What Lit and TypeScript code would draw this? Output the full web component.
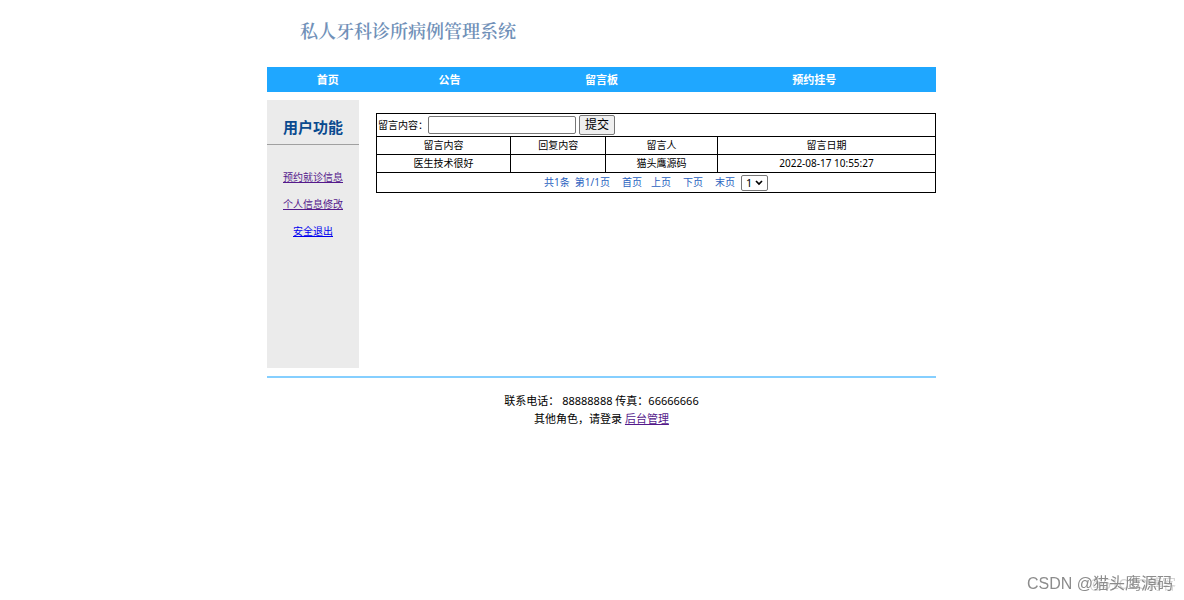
import { LitElement, html, css } from "lit";
import { customElement, property, state } from "lit/decorators.js";

interface Message {
  content: string;
  reply: string;
  author: string;
  date: string;
}

@customElement("side-menu")
class SideMenu extends LitElement {
  static styles = css`
    :host {
      display: block;
      background: #ebebeb;
      text-align: center;
    }
    .heading {
      margin: 0;
      padding: 15px 0 5px;
      border-bottom: 1px solid #a0a0a0;
      color: #0a4a8f;
      font-size: 15px;
      line-height: 24px;
      font-weight: bold;
    }
    .links {
      display: flex;
      flex-direction: column;
      gap: 11px;
      margin: 0;
      padding: 24px 0 0;
      list-style: none;
      line-height: 16px;
    }
    .link {
      color: #0000ee;
    }
    .visited {
      color: #551a8b;
    }
  `;

  render() {
    return html`
      <h2 class="heading">用户功能</h2>
      <ul class="links">
        <li><a class="link visited" href="#appointments">预约就诊信息</a></li>
        <li><a class="link visited" href="#profile">个人信息修改</a></li>
        <li><a class="link" href="#logout">安全退出</a></li>
      </ul>
    `;
  }
}

@customElement("message-board")
class MessageBoard extends LitElement {
  static styles = css`
    :host {
      display: block;
    }
    .board {
      width: 100%;
      border-collapse: collapse;
      table-layout: fixed;
      text-align: center;
      line-height: 15px;
    }
    .cell {
      border: 1px solid #000;
      padding: 1px;
      height: 15px;
      font-weight: normal;
    }
    .col-content {
      width: 24%;
    }
    .col-reply {
      width: 17%;
    }
    .col-author {
      width: 20%;
    }
    .form {
      display: flex;
      align-items: center;
      height: 20px;
    }
    .text {
      box-sizing: border-box;
      width: 148px;
      height: 18px;
      margin-right: 3px;
      border: 1px solid #767676;
      border-radius: 2px;
      padding: 0 2px;
      font: inherit;
    }
    .submit {
      box-sizing: border-box;
      height: 20px;
      border: 1px solid #767676;
      border-radius: 2px;
      padding: 0 5px;
      background: #efefef;
      color: #000;
      font-family: inherit;
      font-size: 12px;
      line-height: 18px;
    }
    .pager {
      display: flex;
      align-items: center;
      justify-content: center;
      height: 17px;
      color: #2a62c0;
    }
    .total {
      margin-right: 5px;
    }
    .first {
      margin: 0 9px 0 12px;
    }
    .next {
      margin: 0 12px;
    }
    .page {
      color: inherit;
      text-decoration: none;
    }
    .select {
      box-sizing: border-box;
      width: 27px;
      height: 16px;
      margin-left: 6px;
      border: 1px solid #767676;
      border-radius: 2px;
      padding: 0 0 0 4px;
      appearance: none;
      color: #000;
      background: #fff
        url("data:image/svg+xml,%3Csvg xmlns='http://www.w3.org/2000/svg' viewBox='0 0 8 6'%3E%3Cpath d='M1 1l3 3 3-3' fill='none' stroke='black' stroke-width='1.7'/%3E%3C/svg%3E")
        right 4px center / 8px 6px no-repeat;
      font-family: inherit;
      font-size: 11px;
      line-height: 14px;
    }
  `;

  @property({ attribute: false }) messages: Message[] = [];

  render() {
    return html`
      <table class="board">
        <colgroup>
          <col class="col-content" />
          <col class="col-reply" />
          <col class="col-author" />
          <col />
        </colgroup>
        <tbody>
          <tr>
            <td class="cell" colspan="4">
              <form class="form" @submit=${(e: Event) => e.preventDefault()}>
                <label for="content">留言内容：</label>
                <input class="text" id="content" type="text" />
                <button class="submit" type="submit">提交</button>
              </form>
            </td>
          </tr>
          <tr>
            <th class="cell" scope="col">留言内容</th>
            <th class="cell" scope="col">回复内容</th>
            <th class="cell" scope="col">留言人</th>
            <th class="cell" scope="col">留言日期</th>
          </tr>
          ${this.messages.map(
            (m) => html`
              <tr>
                <td class="cell">${m.content}</td>
                <td class="cell">${m.reply}</td>
                <td class="cell">${m.author}</td>
                <td class="cell">${m.date}</td>
              </tr>
            `
          )}
          <tr>
            <td class="cell" colspan="4">
              <div class="pager">
                <span class="total">共1条</span>
                <span>第1/1页</span>
                <a class="page first" href="#first">首页</a>
                <a class="page" href="#prev">上页</a>
                <a class="page next" href="#next">下页</a>
                <a class="page" href="#last">末页</a>
                <select class="select" aria-label="页码">
                  <option>1</option>
                </select>
              </div>
            </td>
          </tr>
        </tbody>
      </table>
    `;
  }
}

@customElement("app-root")
class AppRoot extends LitElement {
  static styles = css`
    :host {
      display: block;
      box-sizing: border-box;
      min-height: 100vh;
      padding-left: 19px;
      background: #fff;
      color: #000;
      font-family: "Noto Sans", "Noto Sans CJK SC", sans-serif;
      font-size: 10px;
    }
    .page {
      max-width: 669px;
      margin: 0 auto;
    }
    .title {
      margin: 0;
      padding: 18px 33px 21px;
      color: #7090b8;
      font-family: "Liberation Serif", "Noto Serif CJK SC", "Noto Sans CJK SC", serif;
      font-size: 18px;
      line-height: 28px;
      font-weight: 600;
    }
    .nav {
      display: grid;
      grid-template-columns: 2fr 2fr 3fr 4fr;
      background: #1fa7ff;
      text-align: center;
      font-size: 11px;
      line-height: 25px;
      font-weight: bold;
    }
    .nav-link {
      color: #fff;
      text-decoration: none;
    }
    .main {
      display: grid;
      grid-template-columns: 92px 1fr;
      gap: 17px;
      min-height: 268px;
      padding: 8px 0;
    }
    .content {
      padding-top: 13px;
    }
    .footer {
      padding-top: 14px;
      border-top: 2px solid #85cfff;
      text-align: center;
      font-size: 11px;
      line-height: 18px;
    }
    .line {
      margin: 0;
    }
    .admin {
      color: #551a8b;
    }
    .mark {
      position: fixed;
      right: 11px;
      bottom: 5px;
      color: #8c8c8c;
      font-family: "Liberation Sans", "Noto Sans CJK SC", sans-serif;
      font-size: 16px;
      line-height: 22px;
      white-space: nowrap;
    }
    .under {
      right: 8px;
      color: #d4d4d4;
      font-size: 14px;
    }
  `;

  @state() private messages: Message[] = [
    { content: "医生技术很好", reply: "", author: "猫头鹰源码", date: "2022-08-17 10:55:27" },
  ];

  render() {
    return html`
      <div class="page">
        <h1 class="title">私人牙科诊所病例管理系统</h1>
        <nav class="nav">
          <a class="nav-link" href="#home">首页</a>
          <a class="nav-link" href="#notices">公告</a>
          <a class="nav-link" href="#board">留言板</a>
          <a class="nav-link" href="#booking">预约挂号</a>
        </nav>
        <main class="main">
          <side-menu></side-menu>
          <div class="content">
            <message-board .messages=${this.messages}></message-board>
          </div>
        </main>
        <footer class="footer">
          <p class="line">联系电话： 88888888 传真：66666666</p>
          <p class="line">其他角色，请登录 <a class="admin" href="#admin">后台管理</a></p>
        </footer>
      </div>
      <span class="mark under">@51CTO博客</span>
      <span class="mark">CSDN @猫头鹰源码</span>
    `;
  }
}
